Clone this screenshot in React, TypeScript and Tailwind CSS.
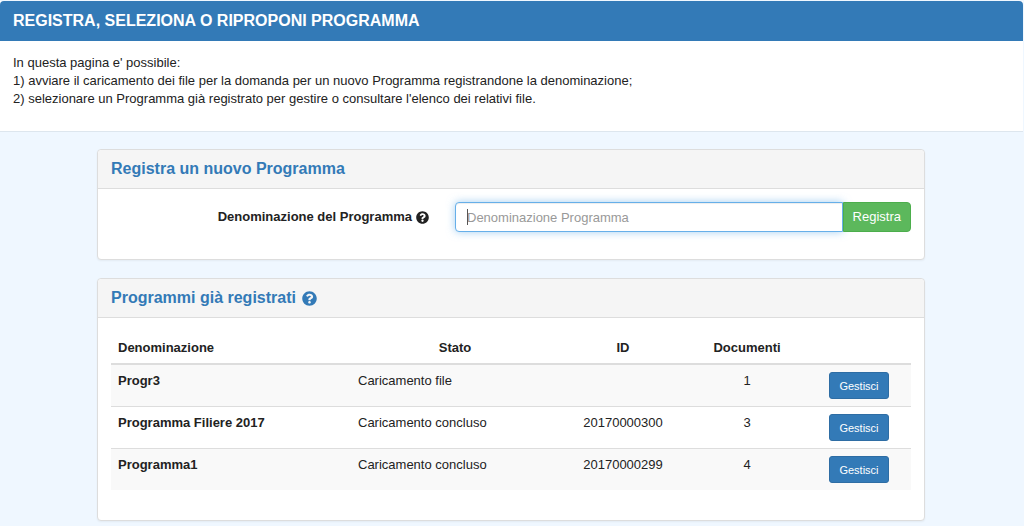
import React from 'react';
import { FaQuestionCircle } from 'react-icons/fa';

interface Programma {
  nome: string;
  stato: string;
  id: string;
  documenti: number;
}

const programmi: Programma[] = [
  { nome: 'Progr3', stato: 'Caricamento file', id: '', documenti: 1 },
  { nome: 'Programma Filiere 2017', stato: 'Caricamento concluso', id: '20170000300', documenti: 3 },
  { nome: 'Programma1', stato: 'Caricamento concluso', id: '20170000299', documenti: 4 },
];

interface PanelProps {
  title: React.ReactNode;
  children: React.ReactNode;
}

const Panel: React.FC<PanelProps> = ({ title, children }) => (
  <section className="rounded border border-[#dddddd] bg-white shadow-xs">
    <h2 className="flex h-[39px] items-center gap-1.5 rounded-t border-b border-[#dddddd] bg-[#f5f5f5] px-[13px] text-[16px] font-bold text-[#337ab7]">
      {title}
    </h2>
    {children}
  </section>
);

export default function App() {
  return (
    <div className="min-h-screen bg-[#eff7ff] pt-px pr-px pb-[5px] font-['Liberation_Sans',Arial,sans-serif] text-[13px] leading-[18px] text-[#222222]">
      <header className="border-b border-[#dde6ee] bg-white">
        <h1 className="flex h-10 items-center rounded-t bg-[#337ab7] px-[13px] text-[16px] font-bold text-white">
          REGISTRA, SELEZIONA O RIPROPONI PROGRAMMA
        </h1>
        <div className="px-[13px] pt-[13px] pb-[23px]">
          <p>In questa pagina e' possibile:</p>
          <p>1) avviare il caricamento dei file per la domanda per un nuovo Programma registrandone la denominazione;</p>
          <p>2) selezionare un Programma già registrato per gestire o consultare l'elenco dei relativi file.</p>
        </div>
      </header>

      <div className="pt-[17px] pr-px">
        <main className="mx-auto flex max-w-[828px] flex-col gap-[18px]">
          <Panel title="Registra un nuovo Programma">
            <form className="flex items-center px-[13px] pt-[13px] pb-[27px]" onSubmit={(e) => e.preventDefault()}>
              <label
                htmlFor="denominazione"
                className="flex w-[43%] items-center justify-end gap-1 pr-[26px] font-bold"
              >
                Denominazione del Programma
                <FaQuestionCircle className="size-[13px]" />
              </label>
              <div className="relative flex flex-1">
                <input
                  id="denominazione"
                  type="text"
                  autoFocus
                  placeholder="Denominazione Programma"
                  className="h-[30px] min-w-0 flex-1 rounded-l border border-[#66afe9] bg-white px-[11px] caret-transparent shadow-[inset_0_1px_1px_rgba(0,0,0,0.075),0_0_8px_rgba(102,175,233,0.6)] outline-none placeholder:text-[#999999]"
                />
                {/* text cursor */}
                <span className="pointer-events-none absolute top-[7px] left-3 h-4 w-px bg-[#555555]" />
                <button
                  type="submit"
                  className="z-10 h-[30px] rounded-r border border-[#4cae4c] bg-[#5cb85c] px-[9px] text-white"
                >
                  Registra
                </button>
              </div>
            </form>
          </Panel>

          <Panel
            title={
              <>
                Programmi già registrati
                <FaQuestionCircle className="size-[15px]" />
              </>
            }
          >
            <div className="px-[13px] pt-[13px] pb-[30px]">
              <table className="w-full table-fixed border-collapse">
                <thead>
                  <tr className="border-b-2 border-[#dddddd]">
                    <th className="w-[30%] px-[7px] pt-2 pb-1.5 text-left">Denominazione</th>
                    <th className="w-[26%] px-[7px] pt-2 pb-1.5">Stato</th>
                    <th className="w-[16%] px-[7px] pt-2 pb-1.5">ID</th>
                    <th className="w-[15%] px-[7px] pt-2 pb-1.5">Documenti</th>
                    <th className="w-[13%] px-[7px] pt-2 pb-1.5" aria-label="Azioni" />
                  </tr>
                </thead>
                <tbody>
                  {programmi.map((p) => (
                    <tr key={p.nome} className="border-b border-[#dddddd] align-top last:border-b-0 odd:bg-[#f9f9f9]">
                      <th scope="row" className="px-[7px] py-[7px] text-left">{p.nome}</th>
                      <td className="px-[7px] py-[7px]">{p.stato}</td>
                      <td className="px-[7px] py-[7px] text-center">{p.id}</td>
                      <td className="px-[7px] py-[7px] text-center">{p.documenti}</td>
                      <td className="px-[7px] py-[7px] text-center">
                        <button
                          type="button"
                          className="mx-auto block h-[27px] rounded-[3px] border border-[#2e6da4] bg-[#337ab7] px-[9px] text-[11px] text-white"
                        >
                          Gestisci
                        </button>
                      </td>
                    </tr>
                  ))}
                </tbody>
              </table>
            </div>
          </Panel>
        </main>
      </div>
    </div>
  );
}
